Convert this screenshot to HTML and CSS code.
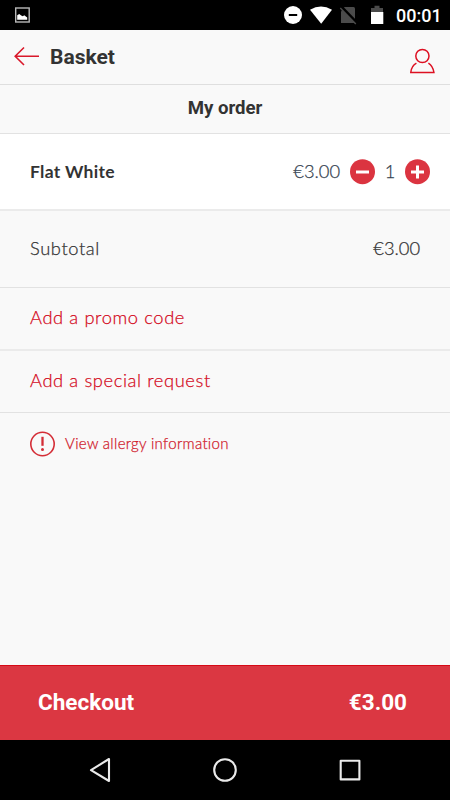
FILE: index.html
```html
<!DOCTYPE html>
<html lang="en">
<head>
<meta charset="utf-8">
<title>Basket</title>
<link rel="stylesheet" href="styles.css">
</head>
<body>
<div class="screen">
  <div class="status">
    <svg class="status-photo" width="17" height="16" viewBox="0 0 17 16"><rect x="1.700" y="1" width="13.500" height="14" fill="none" stroke="#b8b8b8" stroke-width="1.400"/><path d="M3.200 12.700V8.300l2-1.200 2 1.500 1.700.6 1.300-.9 3 2.300v2.100z" fill="#fff"/></svg>
    <svg class="status-icons" width="120" height="22" viewBox="0 0 120 22">
      <circle cx="9" cy="11" r="9" fill="#fff"/><path d="M4.800 11h8.400" stroke="#000" stroke-width="2"/>
      <path d="M26 5.800Q37 -.8 48 5.800L37.200 19.800z" fill="#fff"/>
      <path d="M57 7.500l3.500-4.500h9q1.500 0 1.500 1.500v14.500h-14z" fill="#4b4b4b"/><path d="M57.500 3l15.500 16" stroke="#000" stroke-width="3"/><path d="M56.300 4l15.500 16" stroke="#4b4b4b" stroke-width="1.400"/>
      <path d="M87 8V4h3.500V1.700h5V4H99v4z" fill="#4b4b4b"/><path d="M87 8h12.300v12H87z" fill="#fff"/>
    </svg>
    <span class="clock">00:01</span>
  </div>
  <header class="header">
    <svg class="back" width="26" height="20" viewBox="0 0 26 20" fill="none" stroke="#d9192b" stroke-width="1.600"><path d="M25 10.300H1.500M10 1.500L1.200 10.300 10 19"/></svg>
    <h1>Basket</h1>
    <svg class="user" width="26" height="26" viewBox="0 0 26 26" fill="none" stroke="#dd1022" stroke-width="1.500"><circle cx="12.400" cy="8" r="6.600"/><path d="M6.400 15.100Q1.400 17.900 .8 24.400H23.900Q22.900 17.900 18.400 15.100"/></svg>
  </header>
  <h2 class="title">My order</h2>
  <section class="row item">
    <span class="name">Flat White</span>
    <span class="price">€3.00</span>
    <svg width="26" height="26" viewBox="0 0 26 26"><circle cx="13.500" cy="12.700" r="12.500" fill="#db3440"/><path d="M7 13h13" stroke="#fff" stroke-width="3"/></svg>
    <span class="quantity">1</span>
    <svg width="26" height="26" viewBox="0 0 26 26"><circle cx="13.500" cy="12.700" r="12.500" fill="#db3440"/><path d="M7 13h13M13.500 6.500v13" stroke="#fff" stroke-width="3"/></svg>
  </section>
  <section class="row subtotal"><span class="label">Subtotal</span><span class="amount">€3.00</span></section>
  <a class="row promo"><span class="label">Add a promo code</span></a>
  <a class="row request"><span class="label">Add a special request</span></a>
  <a class="allergy">
    <svg width="26" height="26" viewBox="0 0 26 26"><circle cx="12.500" cy="13" r="11.700" fill="none" stroke="#d42d36" stroke-width="1.600"/><path d="M12.500 5.800v9" stroke="#d42d36" stroke-width="2.300"/><circle cx="12.500" cy="18.500" r="1.500" fill="#d42d36"/></svg>
    <span>View allergy information</span>
  </a>
  <div class="checkout"><span>Checkout</span><span class="total">€3.00</span></div>
  <nav class="nav">
    <svg width="450" height="60" viewBox="0 0 450 60" fill="none" stroke="#eaeaea" stroke-width="2.100" stroke-linejoin="round"><path d="M109 19v22L91 30.100z"/><circle cx="225" cy="30" r="10.800"/><rect x="340.700" y="20.700" width="18.700" height="18.700"/></svg>
  </nav>
</div>
</body>
</html>
```
FILE: styles.css
```css
* { box-sizing: border-box; }
body { margin: 0; background: #f9f9f9; }
.screen {
  width: 450px;
  height: 800px;
  display: flex;
  flex-direction: column;
  background: #f9f9f9;
  color: #333;
  font-family: Lato, sans-serif;
  font-variant-ligatures: none;
  overflow: hidden;
}
svg { display: block; flex: none; }
.status {
  height: 30px;
  flex: none;
  display: flex;
  align-items: center;
  padding: 0 12px 0 14px;
  background: #000;
  color: #fff;
}
.status-icons { margin-left: auto; margin-right: -8px; }
.clock { font: 500 18px/30px Roboto, sans-serif; width: 42px; padding-top: 2px; }
.header {
  height: 55px;
  flex: none;
  display: flex;
  align-items: center;
  padding: 0 14px;
  border-bottom: 1px solid #dfdfdf;
}
.back { margin-top: -3px; }
h1, h2 { margin: 0; font-family: Roboto, sans-serif; font-weight: 700; }
h1 { font-size: 21px; margin-left: 10px; }
.user { margin-left: auto; margin-top: 8px; }
.title {
  height: 49px;
  flex: none;
  font-size: 18.600px;
  line-height: 46px;
  text-align: center;
  border-bottom: 1px solid #e2e2e2;
}
.row {
  flex: none;
  display: flex;
  align-items: center;
  padding: 0 30px 2px;
  font-size: 18.300px;
  font-weight: 300;
  border-bottom: 1px solid #e2e2e2;
}
.label { letter-spacing: .62px; }
.label, .amount, .price, .quantity, .allergy span { -webkit-text-stroke: .25px currentColor; }
.item { height: 77px; padding: 0 20px 0 30px; background: #fff; border-bottom: 2px solid #ebebeb; }
.name { font-size: 17.500px; font-weight: 700; letter-spacing: .3px; }
.price { margin-left: auto; margin-right: 9px; }
.price, .quantity { color: #354250; padding-bottom: 1px; }
.quantity { width: 30px; text-align: center; }
.item svg:last-child { margin-left: -1px; }
.subtotal { height: 77px; justify-content: space-between; }
.promo, .request { color: #d40a1d; padding-bottom: 3px; }
.promo { height: 63px; border-bottom: 2px solid #ebebeb; }
.request { height: 62px; }
.allergy {
  display: flex;
  align-items: center;
  gap: 9px;
  padding: 18px 30px;
  font-size: 15px;
  font-weight: 300;
  letter-spacing: .32px;
  color: #d0202c;
}
.allergy span { margin-top: -2px; }
.checkout {
  height: 75px;
  flex: none;
  margin-top: auto;
  display: flex;
  align-items: center;
  justify-content: space-between;
  padding: 0 43px 3px 38px;
  border-top: 1px solid #d60a16;
  background: #db3742;
  color: #fff;
  font: 700 22.500px Roboto, sans-serif;
}
.nav { height: 60px; flex: none; background: #000; }
```
